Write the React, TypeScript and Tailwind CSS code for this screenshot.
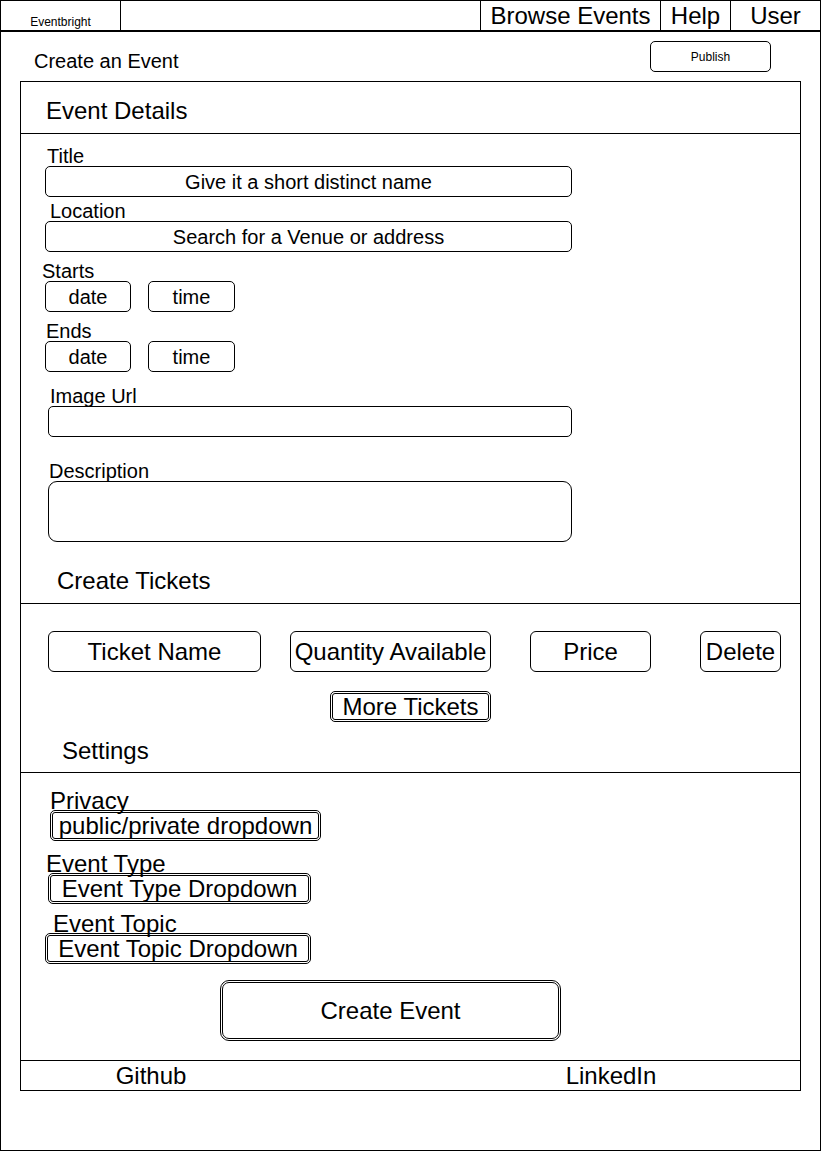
export default function App() {
  return (
    <div className="w-[821px] h-[1151px] border border-black bg-white text-black font-['Liberation_Sans',Arial,sans-serif] flex flex-col">
      {/* top bar */}
      <div className="h-[31px] border-b-2 border-black flex shrink-0">
        <div className="w-[120px] border-r border-black flex justify-center text-[12px] leading-none pt-[15px]">Eventbright</div>
        <div className="w-[360px] border-r border-black" />
        <div className="w-[180px] border-r border-black flex items-center justify-center text-[24px] leading-none">Browse Events</div>
        <div className="w-[70px] border-r border-black flex items-center justify-center text-[24px] leading-none">Help</div>
        <div className="flex-1 flex items-center justify-center text-[24px] leading-none">User</div>
      </div>

      {/* heading row */}
      <div className="flex items-start h-[40px] shrink-0">
        <div className="ml-[33px] mt-[19px] text-[20px] leading-none">Create an Event</div>
        <div className="ml-auto mr-[49px] mt-[9px] w-[121px] h-[31px] border border-black rounded-[5px] flex items-center justify-center text-[12px] leading-none">Publish</div>
      </div>

      {/* main panel */}
      <div className="ml-[19px] mt-[9px] w-[781px] h-[1010px] border border-black flex flex-col shrink-0">
        {/* Event Details */}
        <div className="h-[52px] border-b border-black pt-[17px] pl-[25px] text-[24px] leading-none shrink-0">Event Details</div>

        <div className="mt-[12px] ml-[26px] text-[20px] leading-none">Title</div>
        <div className="ml-[24px] w-[527px] h-[31px] border border-black rounded-[5px] flex items-center justify-center text-[20px] leading-none">Give it a short distinct name</div>

        <div className="mt-[4px] ml-[29px] text-[20px] leading-none">Location</div>
        <div className="ml-[24px] w-[527px] h-[31px] border border-black rounded-[5px] flex items-center justify-center text-[20px] leading-none">Search for a Venue or address</div>

        <div className="mt-[9px] ml-[21px] text-[20px] leading-none">Starts</div>
        <div className="flex">
          <div className="ml-[24px] w-[86px] h-[31px] border border-black rounded-[5px] flex items-center justify-center text-[20px] leading-none">date</div>
          <div className="ml-[17px] w-[87px] h-[31px] border border-black rounded-[5px] flex items-center justify-center text-[20px] leading-none">time</div>
        </div>

        <div className="mt-[9px] ml-[25px] text-[20px] leading-none">Ends</div>
        <div className="flex">
          <div className="ml-[24px] w-[86px] h-[31px] border border-black rounded-[5px] flex items-center justify-center text-[20px] leading-none">date</div>
          <div className="ml-[17px] w-[87px] h-[31px] border border-black rounded-[5px] flex items-center justify-center text-[20px] leading-none">time</div>
        </div>

        <div className="mt-[14px] ml-[29px] text-[20px] leading-none">Image Url</div>
        <div className="ml-[27px] w-[524px] h-[31px] border border-black rounded-[5px]" />

        <div className="mt-[24px] ml-[28px] text-[20px] leading-none">Description</div>
        <div className="ml-[27px] w-[524px] h-[61px] border border-black rounded-[9px]" />

        {/* Create Tickets */}
        <div className="h-[62px] border-b border-black pt-[27px] pl-[36px] text-[24px] leading-none shrink-0">Create Tickets</div>

        <div className="mt-[27px] flex">
          <div className="ml-[27px] w-[213px] h-[41px] border border-black rounded-[6px] flex items-center justify-center text-[24px] leading-none">Ticket Name</div>
          <div className="ml-[29px] w-[201px] h-[41px] border border-black rounded-[6px] flex items-center justify-center text-[24px] leading-none">Quantity Available</div>
          <div className="ml-[39px] w-[121px] h-[41px] border border-black rounded-[6px] flex items-center justify-center text-[24px] leading-none">Price</div>
          <div className="ml-[49px] w-[81px] h-[41px] border border-black rounded-[6px] flex items-center justify-center text-[24px] leading-none">Delete</div>
        </div>

        <div className="mt-[19px] ml-[309px] w-[161px] h-[31px] border-[3px] border-double border-black rounded-[5px] flex items-center justify-center text-[24px] leading-none">More Tickets</div>

        {/* Settings */}
        <div className="h-[51px] border-b border-black pt-[17px] pl-[41px] text-[24px] leading-none shrink-0">Settings</div>

        <div className="mt-[16px] ml-[29px] text-[24px] leading-none">Privacy</div>
        <div className="mt-[-3px] ml-[29px] w-[271px] h-[31px] border-[3px] border-double border-black rounded-[5px] flex items-center justify-center text-[24px] leading-none">public/private dropdown</div>

        <div className="mt-[11px] ml-[25px] text-[24px] leading-none">Event Type</div>
        <div className="mt-[-3px] ml-[27px] w-[263px] h-[31px] border-[3px] border-double border-black rounded-[5px] flex items-center justify-center text-[24px] leading-none">Event Type Dropdown</div>

        <div className="mt-[8px] ml-[32px] text-[24px] leading-none">Event Topic</div>
        <div className="mt-[-3px] ml-[24px] w-[266px] h-[31px] border-[3px] border-double border-black rounded-[5px] flex items-center justify-center text-[24px] leading-none">Event Topic Dropdown</div>

        <div className="mt-[16px] ml-[199px] w-[341px] h-[61px] border-[3px] border-double border-black rounded-[9px] flex items-center justify-center text-[24px] leading-none">Create Event</div>

        {/* footer */}
        <div className="mt-auto h-[30px] border-t border-black flex items-center text-[24px] leading-none shrink-0">
          <div className="w-[260px] text-center">Github</div>
          <div className="ml-[230px] w-[200px] text-center">LinkedIn</div>
        </div>
      </div>
    </div>
  );
}
